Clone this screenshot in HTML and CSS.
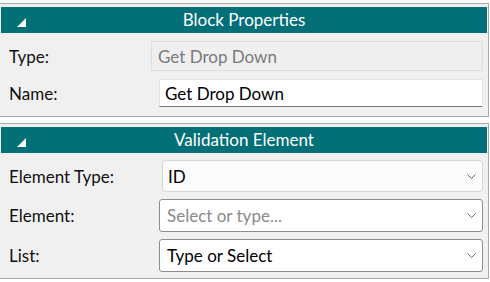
FILE: index.html
```html
<!DOCTYPE html>
<html>
<head>
<meta charset="utf-8">
<link rel="stylesheet" href="styles.css">
</head>
<body>
<div class="panel p1">
  <div class="hdr"><span class="tri"></span><span class="title">Block Properties</span></div>
  <div class="body">
    <div class="row r-type"><span class="lbl">Type:</span><div class="field ro">Get Drop Down</div></div>
    <div class="row r-name"><span class="lbl">Name:</span><div class="field txt">Get Drop Down</div></div>
  </div>
</div>
<div class="panel p2">
  <div class="hdr"><span class="tri"></span><span class="title">Validation Element</span></div>
  <div class="body">
    <div class="row r-sel"><span class="lbl">Element Type:</span><div class="field dd flat"><span class="val">ID</span><svg class="chev" width="9" height="5" viewBox="0 0 9 5"><path d="M0.5 0.5 L4.5 4.5 L8.5 0.5" fill="none" stroke="#666" stroke-width="1"/></svg></div></div>
    <div class="row r-sel"><span class="lbl">Element:</span><div class="field dd box"><span class="val ph">Select or type...</span><svg class="chev" width="9" height="5" viewBox="0 0 9 5"><path d="M0.5 0.5 L4.5 4.5 L8.5 0.5" fill="none" stroke="#666" stroke-width="1"/></svg></div></div>
    <div class="row r-sel"><span class="lbl">List:</span><div class="field dd box"><span class="val">Type or Select</span><svg class="chev" width="9" height="5" viewBox="0 0 9 5"><path d="M0.5 0.5 L4.5 4.5 L8.5 0.5" fill="none" stroke="#666" stroke-width="1"/></svg></div></div>
  </div>
</div>
</body>
</html>
```
FILE: styles.css
```css
html, body {
  margin: 0;
  padding: 0;
  background: #ffffff;
  font-family: "Lato", "Noto Sans", sans-serif;
  font-size: 17px;
  color: #111;
}
body {
  width: 490px;
  height: 282px;
  overflow: hidden;
}
.panel {
  box-sizing: border-box;
  width: 490px;
  margin-left: -1px;
  border: 1px solid #a9a9a9;
  background: #f0f0f0;
  padding: 3px 1px 0 1px;
}
.p1 { margin-top: 3px; }
.p2 { margin-top: 6px; }
.hdr {
  height: 26px;
  background: #036f76;
  color: #fff;
  display: flex;
  align-items: center;
  justify-content: center;
  position: relative;
}
.title {
  font-size: 17px;
  line-height: 26px;
}
.tri {
  position: absolute;
  left: 16px;
  top: 11px;
  width: 0;
  height: 0;
  border-style: solid;
  border-width: 0 0 9px 9px;
  border-color: transparent transparent #ffffff transparent;
}
.body {
  display: flex;
  flex-direction: column;
  padding: 0 4px 0 8px;
}
.p1 .body { padding-top: 8px; padding-bottom: 9px; gap: 8px; }
.p2 .body { padding-top: 7px; padding-bottom: 6px; gap: 7px; }
.row {
  display: flex;
  align-items: center;
}
.lbl {
  width: 142px;
  flex: none;
  color: #111;
}
.field {
  flex: 1;
  box-sizing: border-box;
  display: flex;
  align-items: center;
}
.ro {
  height: 30px;
  border: 1px solid #dddddd;
  background: #efefef;
  color: #7a7a7a;
  padding-left: 6px;
}
.txt {
  height: 28px;
  margin-left: 8px;
  background: #ffffff;
  border: 1px solid #e4e4e4;
  border-bottom: 1px solid #7a7a7a;
  padding-left: 5px;
  color: #000;
}
.dd {
  justify-content: space-between;
  border-radius: 3px;
  padding: 0 6px 0 5px;
}
.flat {
  height: 32px;
  margin-left: 11px;
  background: #fbfbfb;
  border: 1px solid #d6d6d6;
}
.box {
  height: 33px;
  margin-left: 8px;
  background: #ffffff;
  border: 1px solid #8c8c8c;
  padding-left: 7px;
}
.val { color: #000; }
.val.ph { color: #8a8a8a; }
.chev { flex: none; }
```
